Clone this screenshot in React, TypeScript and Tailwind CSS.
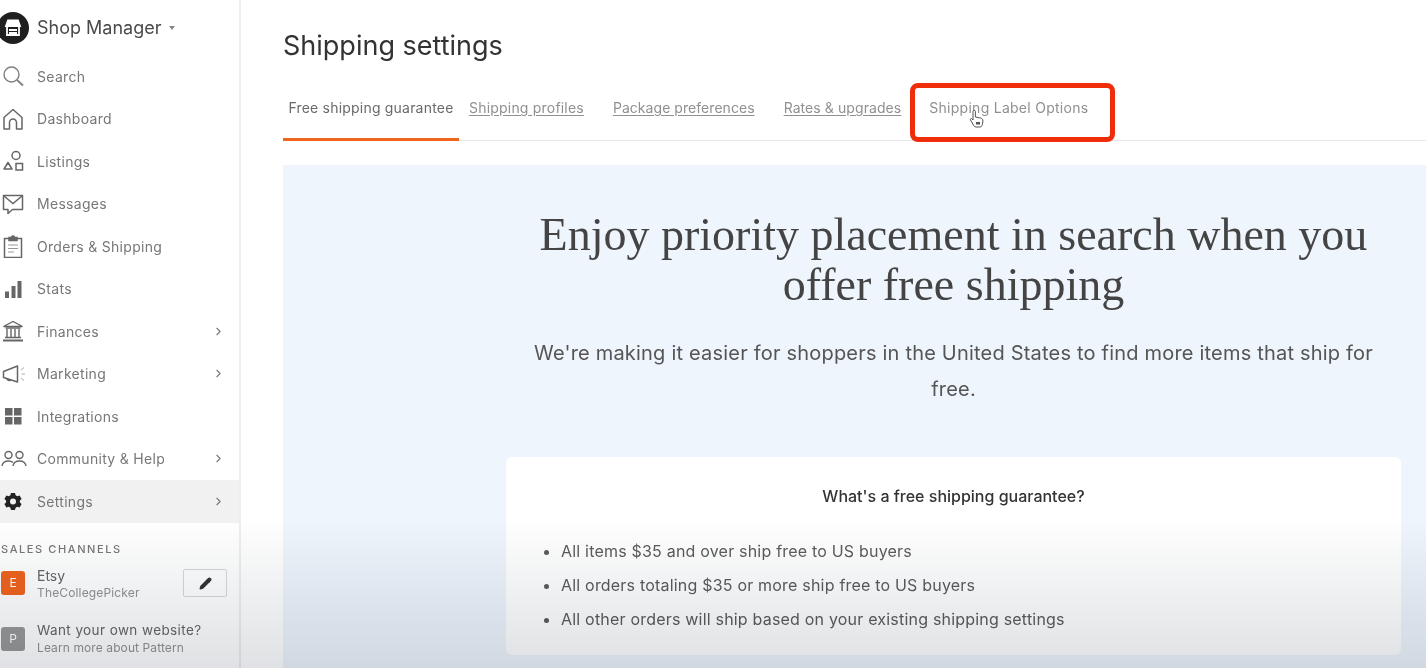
import React from "react";
import { ChevronRight, Pencil } from "lucide-react";

const stroke = "#666666";

const icons: Record<string, React.ReactNode> = {
  search: (
    <svg width="24" height="24" viewBox="0 0 24 24" fill="none" stroke="#808080" strokeWidth="1.4">
      <circle cx="10.5" cy="10.5" r="7.5" />
      <path d="M16 16l6 5.5" strokeWidth="1.8" />
    </svg>
  ),
  home: (
    <svg width="24" height="24" viewBox="0 0 24 24" fill="none" stroke={stroke} strokeWidth="1.5">
      <path d="M3 22V10.5L12 2.5l9 8V22h-5.5v-6.5a3.5 3.5 0 0 0-7 0V22z" strokeLinejoin="round" />
    </svg>
  ),
  shapes: (
    <svg width="24" height="24" viewBox="0 0 24 24" fill="none" stroke={stroke} strokeWidth="1.5">
      <circle cx="15" cy="6.5" r="4" />
      <rect x="15" y="14.5" width="6.5" height="6.5" />
      <path d="M7 13.5l4 6.5H3z" strokeLinejoin="round" />
    </svg>
  ),
  message: (
    <svg width="24" height="24" viewBox="0 0 24 24" fill="none" stroke={stroke} strokeWidth="1.5">
      <path d="M2.5 3.5h19v14H11.5l-4.5 4v-4H2.5z" strokeLinejoin="round" />
      <path d="M3 4l9 7.5L21 4" />
    </svg>
  ),
  orders: (
    <svg width="24" height="24" viewBox="0 0 24 24" fill="none" stroke={stroke} strokeWidth="1.5">
      <path d="M8 4.5H3.5v19h17v-19H16" />
      <path d="M8 6.5V3.5h2.5a1.5 1.5 0 0 1 3 0H16v3z" fill={stroke} />
      <path d="M7 11h10M7 14.5h10M7 18h6" strokeWidth="1" stroke="#999" />
    </svg>
  ),
  stats: (
    <svg width="24" height="24" viewBox="0 0 24 24" fill="#666">
      <rect x="4" y="14.5" width="4" height="6.5" />
      <rect x="10.5" y="9" width="4" height="12" />
      <rect x="16.5" y="4" width="4" height="17" />
    </svg>
  ),
  bank: (
    <svg width="24" height="24" viewBox="0 0 24 24" fill="none" stroke={stroke} strokeWidth="1.4">
      <path d="M2.5 7.5L12 2.5l9.5 5z" />
      <path d="M6 10v8M10 10v8M14 10v8M18 10v8M4.5 9h15M4 18.5h16" />
      <path d="M2 21.5h20" strokeWidth="2" />
    </svg>
  ),
  megaphone: (
    <svg width="26" height="24" viewBox="0 0 26 24" fill="none" stroke={stroke} strokeWidth="1.5">
      <path d="M2.5 9.5L16.5 4v16L2.5 15.5z" strokeLinejoin="round" />
      <path d="M6 16.5a2.5 2.5 0 0 0 4 1.5" />
      <path d="M20 8l3-2.5M20.5 12H24M20 16l3 2.5" stroke="#aaa" strokeWidth="1" />
    </svg>
  ),
  grid: (
    <svg width="24" height="24" viewBox="0 0 24 24" fill="#666">
      <rect x="4" y="4" width="7.5" height="7.5" />
      <rect x="13" y="4" width="7.5" height="7.5" />
      <rect x="4" y="13" width="7.5" height="7.5" />
      <rect x="13" y="13" width="7.5" height="7.5" />
    </svg>
  ),
  people: (
    <svg width="26" height="24" viewBox="0 0 26 24" fill="none" stroke={stroke} strokeWidth="1.4">
      <circle cx="7.5" cy="8" r="3.5" />
      <circle cx="18.5" cy="8" r="3.5" />
      <path d="M1 19c.5-3.5 3-5 6.5-5 2 0 3.5.5 4.5 1.5" />
      <path d="M12 19c.5-3.5 3-5 6.5-5s6 1.5 6.5 5" />
    </svg>
  ),
  gear: (
    <svg width="24" height="24" viewBox="0 0 24 24" fill="#222">
      <path
        fillRule="evenodd"
        d="M10 4h4l.6 2.3 1.7.9 2.3-.7 2 3.5-1.7 1.6v1.8l1.7 1.6-2 3.5-2.3-.7-1.7.9L14 20.9h-4l-.6-2.2-1.7-.9-2.3.7-2-3.5 1.7-1.6v-1.8L3.4 10l2-3.5 2.3.7 1.7-.9zM12 9.5a3 3 0 1 0 0 6 3 3 0 0 0 0-6z"
      />
    </svg>
  ),
};

const navItems = [
  { label: "Search", icon: "search" },
  { label: "Dashboard", icon: "home" },
  { label: "Listings", icon: "shapes" },
  { label: "Messages", icon: "message" },
  { label: "Orders & Shipping", icon: "orders" },
  { label: "Stats", icon: "stats" },
  { label: "Finances", icon: "bank", arrow: true },
  { label: "Marketing", icon: "megaphone", arrow: true },
  { label: "Integrations", icon: "grid" },
  { label: "Community & Help", icon: "people", arrow: true },
  { label: "Settings", icon: "gear", arrow: true, active: true },
];

const tabs = [
  { label: "Shipping profiles", cls: "ml-[10px] tracking-[0.2px]" },
  { label: "Package preferences", cls: "ml-[29px] tracking-[0.05px]" },
  { label: "Rates & upgrades", cls: "ml-[29px] tracking-[0.08px]" },
];

const bullets = [
  "All items $35 and over ship free to US buyers",
  "All orders totaling $35 or more ship free to US buyers",
  "All other orders will ship based on your existing shipping settings",
];

const App: React.FC = () => {
  return (
    <div className="relative flex h-[668px] w-[1426px] overflow-hidden bg-white font-['Inter',sans-serif]">
      <aside className="w-[241px] shrink-0 border-r-2 border-[#eeeeee] bg-white">
        <div className="flex h-[55px] items-center">
          <div className="-ml-[3px] flex h-[32px] w-[32px] items-center justify-center rounded-full bg-[#1f1f1f]">
            <svg width="22" height="22" viewBox="0 0 22 22" fill="none" stroke="#fff" strokeWidth="1.8">
              <path d="M4 9L6 3.5h10L18 9z" fill="#fff" />
              <path d="M5 9.5V18h12V9.5" />
              <path d="M7 13h8M7 16h8" />
            </svg>
          </div>
          <span className="ml-[8px] text-[18px] text-[#4a4a4a]">Shop Manager</span>
          <span className="ml-[7px] mt-[1px] h-0 w-0 border-x-[3px] border-t-[4px] border-x-transparent border-t-[#888888]" />
        </div>

        <nav>
          {navItems.map((item) => (
            <div
              key={item.label}
              className={`flex h-[42.5px] items-center pl-[1px] pr-[14px] ${item.active ? "bg-[#f1f1f1]" : ""}`}
            >
              <span className="flex w-[36px] shrink-0 items-center">{icons[item.icon]}</span>
              <span className="flex-1 text-[14px] tracking-[0.3px] text-[#777777]">{item.label}</span>
              {item.arrow && <ChevronRight size={13} className="text-[#777777]" strokeWidth={2} />}
            </div>
          ))}
        </nav>

        <p className="mt-[18px] pl-[1px] text-[11px] font-medium tracking-[1.6px] text-[#777777]">SALES CHANNELS</p>

        <div className="mt-[12px] flex h-[28px] items-center pl-[1px] pr-[12px]">
          <span className="flex h-[24px] w-[24px] items-center justify-center rounded-[3px] bg-[#f1641e] text-[12px] text-white">
            E
          </span>
          <div className="ml-[12px] flex-1 pt-[1px] leading-none">
            <p className="text-[14px] text-[#666666]">Etsy</p>
            <p className="mt-[4px] text-[12px] tracking-[0.15px] text-[#929292]">TheCollegePicker</p>
          </div>
          <button className="flex h-[28px] w-[44px] items-center justify-center rounded-[2px] border border-[#d8d8d8]">
            <Pencil size={13} fill="#333" className="text-[#333333]" />
          </button>
        </div>

        <div className="mt-[27px] flex items-center pl-[1px]">
          <span className="flex h-[24px] w-[24px] items-center justify-center rounded-[3px] bg-[#999999] text-[12px] text-white">
            P
          </span>
          <div className="ml-[12px] leading-none">
            <p className="text-[13.5px] tracking-[0.4px] text-[#666666]">Want your own website?</p>
            <p className="mt-[4px] text-[12px] tracking-[0.1px] text-[#929292]">Learn more about Pattern</p>
          </div>
        </div>
      </aside>

      <main className="flex min-w-0 flex-1 flex-col pl-[42px]">
        <h1 className="mt-[28px] text-[27px] leading-[36px] text-[#333333]">Shipping settings</h1>

        <div className="mt-[24px] flex h-[53px] border-b border-[#e8e8e8] text-[14px] text-[#909090]">
          <div className="mb-[-1px] flex h-[53px] w-[176px] justify-center border-b-[3px] border-[#f1641e] pt-[9px] tracking-[0.2px] text-[#6a6a6a]">
            Free shipping guarantee
          </div>
          {tabs.map((t) => (
            <span key={t.label} className={`${t.cls} pt-[9px] underline underline-offset-2`}>
              {t.label}
            </span>
          ))}
          <span className="ml-[28px] pt-[9px] tracking-[0.27px]">Shipping Label Options</span>
        </div>

        <section className="mt-[24px] flex flex-1 flex-col items-center bg-[#eff5fc] pl-[223px] pr-[25px]">
          <h2 className="mt-[45px] w-[860px] text-center font-['Liberation_Serif',serif] text-[46px] leading-[50px] text-[#444444]">
            Enjoy priority placement in search when you offer free shipping
          </h2>
          <p className="mt-[25px] w-[860px] text-center text-[20px] leading-[36px] tracking-[0.2px] text-[#555555]">
            We're making it easier for shoppers in the United States to find more items that ship for free.
          </p>
          <div className="mt-[50px] h-[198px] w-full rounded-[6px] bg-white">
            <p className="mt-[27px] text-center text-[16px] font-medium text-[#333333]">What's a free shipping guarantee?</p>
            <ul className="mt-[33px] flex list-disc flex-col gap-[14px] pl-[55px] text-[16px] leading-[20px] tracking-[0.2px] text-[#5c5c5c]">
              {bullets.map((b) => (
                <li key={b}>{b}</li>
              ))}
            </ul>
          </div>
        </section>
      </main>

      {/* red callout + cursor sit on top of the tabs */}
      <div className="pointer-events-none absolute left-[910px] top-[83px] h-[59px] w-[205px] rounded-[8px] border-[5px] border-[#f02d0a]" />
      <svg className="pointer-events-none absolute left-[969px] top-[109px]" width="17" height="20" viewBox="0 0 17 20" fill="#fff" stroke="#555" strokeWidth="1">
        <path d="M4 2.5a1.2 1.2 0 0 1 2.4 0V8l5 1c1.5.3 2.5 1 2.5 3l-.5 3.5c-.3 1.5-1 2.5-2.5 2.5H7c-1 0-1.7-.5-2.3-1.5L1.500 11c-.5-1 .7-2 1.700-1L4 11z" />
        <path d="M7 13h4v2.500H7z" fill="#555" stroke="none" />
      </svg>

      {/* video shadow fading up from the bottom, multiplied so dark text stays dark */}
      <div className="pointer-events-none absolute inset-x-0 bottom-0 h-[150px] bg-gradient-to-b from-white to-[#dfe1e4] mix-blend-multiply" />
    </div>
  );
};

export default App;
